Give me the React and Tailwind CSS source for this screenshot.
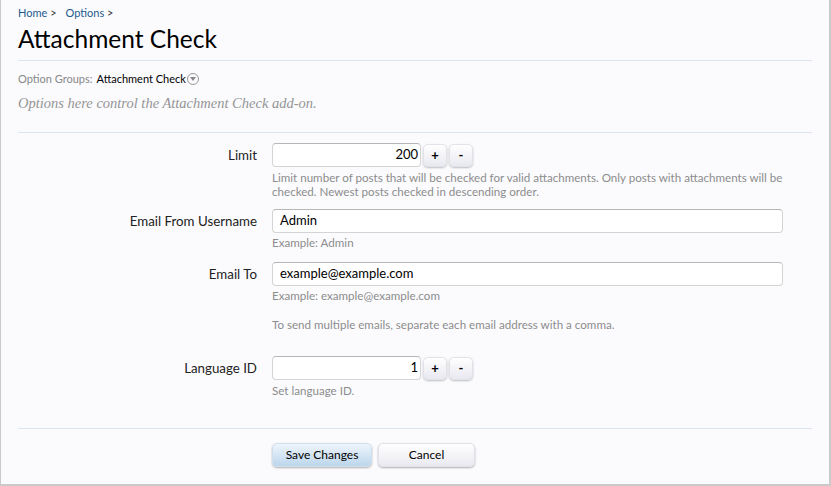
const font = "font-['Lato','Noto_Sans',sans-serif]";

const Separator = () => <div className="h-px bg-[#dce6f0] mx-[17px]"></div>;

const Spin = ({ children }) => (
    <button className="w-[24px] h-[23px] rounded-[5px] bg-gradient-to-b from-white to-[#e8e8f0] border border-[#e2e2ea] shadow-[0_1px_2px_rgba(0,0,0,0.25)] text-[13px] font-bold text-black leading-none flex items-center justify-center">
        {children}
    </button>
);

const Row = ({ label, children }) => (
    <div className="flex">
        <div className="w-[256px] shrink-0 text-right text-[13.3px] text-[#222] leading-[24px]">{label}</div>
        <div className="pl-[15px] flex-1">{children}</div>
    </div>
);

const Help = ({ children, className = "" }) => (
    <p className={"text-[11.6px] text-[#8c8c8c] leading-[14px] " + className}>{children}</p>
);

const Input = ({ value, width, align = "left" }) => (
    <div
        className={
            "h-[24px] bg-white border border-[#d4d4d4] border-t-[#b6b6b6] rounded-[4px] flex items-center text-[13px] text-black " +
            width +
            (align === "right" ? " justify-end pr-[2px]" : " pl-[7px]")
        }
    >
        {value}
    </div>
);

const App = () => {
    return (
        <div className={"w-[831px] h-[486px] bg-[#fbfbfe] border-l border-r-2 border-b-2 border-[#c9c9c9] " + font}>
            {/* header */}
            <div className="px-[17px] pt-[5px]">
                <div className="text-[11px] text-[#1e5a8c] flex gap-[9px]">
                    <span>Home <span className="text-[#333]">&gt;</span></span>
                    <span>Options <span className="text-[#333]">&gt;</span></span>
                </div>
                <h1 className="text-[24.5px] leading-[30px] text-black mt-[2px]">Attachment Check</h1>
            </div>
            <div className="mt-[6px]">
                <Separator />
            </div>
            <div className="px-[17px] pt-[10px]">
                <div className="text-[11px] flex items-center">
                    <span className="text-[#888]">Option Groups:</span>
                    <span className="text-black ml-[4px]">Attachment Check</span>
                    <span className="ml-[1px] w-[12px] h-[12px] rounded-full border border-[#999] flex items-center justify-center">
                        <span className="w-0 h-0 border-l-[3px] border-r-[3px] border-t-[4px] border-l-transparent border-r-transparent border-t-[#888] mt-[1px]"></span>
                    </span>
                </div>
                <p className="font-['Liberation_Serif',serif] italic text-[14.5px] leading-[21px] text-[#949494] mt-[6px]">
                    Options here control the Attachment Check add-on.
                </p>
            </div>
            <div className="mt-[18px]">
                <Separator />
            </div>

            {/* form */}
            <div className="pt-[10px] flex flex-col">
                <Row label="Limit">
                    <div className="flex items-center gap-[2px]">
                        <Input value="200" width="w-[149px]" align="right" />
                        <Spin>+</Spin>
                        <Spin>-</Spin>
                    </div>
                    <Help className="mt-[4px] w-[512px]">
                        Limit number of posts that will be checked for valid attachments. Only posts with attachments will be checked. Newest posts checked in descending order.
                    </Help>
                </Row>
                <div className="mt-[10px]">
                    <Row label="Email From Username">
                        <Input value="Admin" width="w-[511px]" />
                        <Help className="mt-[3px]">Example: Admin</Help>
                    </Row>
                </div>
                <div className="mt-[12px]">
                    <Row label="Email To">
                        <Input value="example@example.com" width="w-[511px]" />
                        <Help className="mt-[3px]">Example: example@example.com</Help>
                        <Help className="mt-[15px]">To send multiple emails, separate each email address with a comma.</Help>
                    </Row>
                </div>
                <div className="mt-[24px]">
                    <Row label="Language ID">
                        <div className="flex items-center gap-[2px]">
                            <Input value="1" width="w-[149px]" align="right" />
                            <Spin>+</Spin>
                            <Spin>-</Spin>
                        </div>
                        <Help className="mt-[4px]">Set language ID.</Help>
                    </Row>
                </div>
            </div>

            <div className="mt-[30px]">
                <Separator />
            </div>
            <div className="flex gap-[6px] pl-[271px] pt-[14px]">
                <button className="w-[100px] h-[24px] rounded-[5px] bg-gradient-to-b from-[#eef5fb] to-[#bcd6ec] border border-[#d0dfee] shadow-[0_1px_2px_rgba(0,0,0,0.3)] text-[12px] text-black">
                    Save Changes
                </button>
                <button className="w-[97px] h-[24px] rounded-[5px] bg-gradient-to-b from-white to-[#e9e9f1] border border-[#e0e0e8] shadow-[0_1px_2px_rgba(0,0,0,0.3)] text-[12px] text-black">
                    Cancel
                </button>
            </div>
        </div>
    );
};

export default App;
